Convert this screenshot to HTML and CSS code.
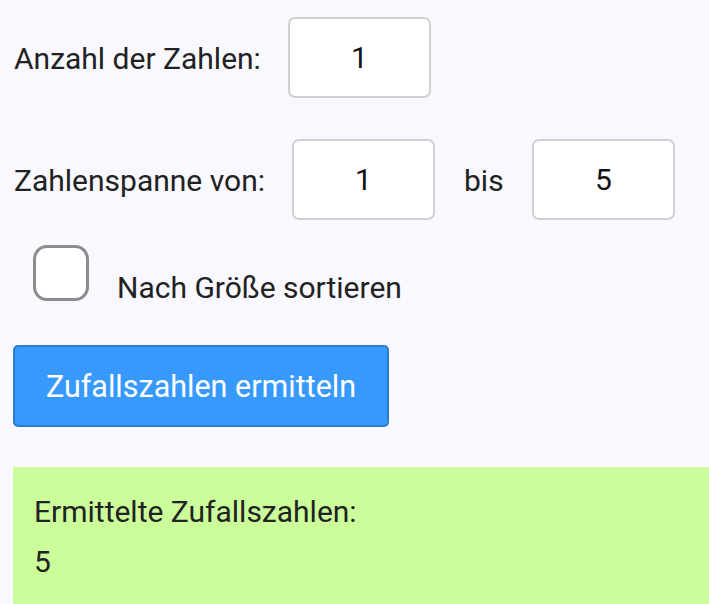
FILE: index.html
```html
<!DOCTYPE html>
<html lang="de">
<head>
<meta charset="utf-8">
<link rel="stylesheet" href="styles.css">
</head>
<body>
<main class="app">
  <div class="row row-count">
    <label class="label label-count">Anzahl der Zahlen:</label>
    <div class="field">1</div>
  </div>
  <div class="row row-range">
    <label class="label label-range">Zahlenspanne von:</label>
    <div class="field">1</div>
    <span class="label label-bis">bis</span>
    <div class="field">5</div>
  </div>
  <div class="check-row">
    <span class="checkbox"></span>
    <span class="label check-label">Nach Größe sortieren</span>
  </div>
  <button class="btn">Zufallszahlen ermitteln</button>
  <section class="result">
    <p class="result-title">Ermittelte Zufallszahlen:</p>
    <p class="result-value">5</p>
  </section>
</main>
</body>
</html>
```
FILE: styles.css
```css
html, body {
  margin: 0;
  padding: 0;
  background: #f8f8fe;
  font-family: Roboto, "Noto Sans", sans-serif;
  color: #222222;
  overflow: hidden;
}
.app {
  padding: 17px 0 0 13px;
  display: flex;
  flex-direction: column;
}
.row {
  display: flex;
  align-items: center;
  height: 81px;
}
.row-range {
  margin-top: 41px;
}
.label {
  font-size: 30px;
  line-height: 34px;
}
.label-count,
.label-range {
  margin-left: 1px;
  padding-top: 3px;
}
.label-count {
  width: 274px;
}
.label-range {
  width: 278px;
}
.label-bis {
  margin-left: 29px;
  width: 68px;
  padding-top: 2px;
}
.field {
  box-sizing: border-box;
  width: 143px;
  height: 81px;
  background: #ffffff;
  border: 2px solid #d0d0d4;
  border-radius: 7px;
  display: flex;
  align-items: center;
  justify-content: center;
  font-size: 30px;
  color: #111111;
}
.check-row {
  display: flex;
  align-items: flex-end;
  margin-top: 25px;
  padding-left: 20px;
}
.checkbox {
  box-sizing: border-box;
  width: 56px;
  height: 56px;
  background: #ffffff;
  border: 3px solid #8c8c90;
  border-radius: 14px;
}
.check-label {
  margin-left: 28px;
  margin-bottom: -4px;
}
.btn {
  box-sizing: border-box;
  margin-top: 44px;
  width: 376px;
  height: 82px;
  background: #3799fc;
  border: 2px solid #2d7ccc;
  border-radius: 5px;
  color: #ffffff;
  font-family: Roboto, "Noto Sans", sans-serif;
  font-size: 30.5px;
  padding: 0;
  text-align: center;
}
.result {
  margin-top: 40px;
  background: #cbfe9a;
  padding: 28px 21px 20px;
  height: 140px;
  box-sizing: border-box;
}
.result-title {
  margin: 0;
  font-size: 30px;
  line-height: 34px;
}
.result-value {
  margin: 16px 0 0;
  font-size: 30px;
  line-height: 34px;
}
```
